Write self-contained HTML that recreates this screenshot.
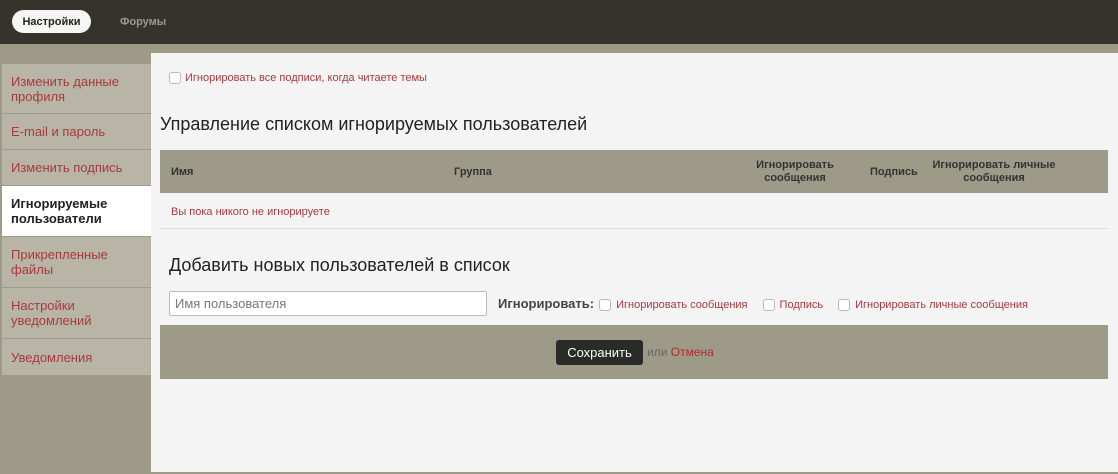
<!DOCTYPE html>
<html><head><meta charset="utf-8"><style>
*{box-sizing:border-box;margin:0;padding:0}
body{width:1118px;height:474px;background:#9e9a88;font-family:"Liberation Sans",Arial,sans-serif;position:relative;overflow:hidden}
.top{position:absolute;left:0;top:0;width:1118px;height:44px;background:#35332b}
.tab1{position:absolute;left:12px;top:10px;width:79px;height:23px;border-radius:12px;background:#f6f6f4;font-size:11px;font-weight:bold;color:#222;text-align:center;line-height:24px}
.tab2{position:absolute;left:120px;top:10px;font-size:11px;font-weight:bold;color:#9a9a90;line-height:24px}
.side{position:absolute;left:2px;top:64px;width:149px}
.side div{background:#b8b4a6;border-bottom:1px solid #9e9a88;color:#a83a3e;font-size:13px;line-height:15px;padding:0 9px;display:flex;align-items:center}
.side div.act{background:#fff;color:#222;font-weight:bold;width:151px}
.main{position:absolute;left:151px;top:53px;width:967px;height:419px;background:#f4f4f4}
.red{color:#a83a3e}
.cb{display:inline-block;width:12px;height:12px;border:1px solid #bbb;border-radius:3px;background:#fff;vertical-align:middle}
.abs{position:absolute}
.th{position:absolute;font-size:11px;font-weight:bold;color:#333;text-align:center;line-height:13px}
</style></head><body>
<div class="top"><div class="tab1">Настройки</div><div class="tab2">Форумы</div></div>
<div class="side">
<div style="height:50px">Изменить данные профиля</div>
<div style="height:36px">E-mail и пароль</div>
<div style="height:36px">Изменить подпись</div>
<div class="act" style="height:51px">Игнорируемые пользователи</div>
<div style="height:51px">Прикрепленные файлы</div>
<div style="height:51px">Настройки уведомлений</div>
<div style="height:36px;border:0">Уведомления</div>
</div>
<div class="main">
<div class="abs" style="left:18px;top:19px;font-size:11px"><span class="cb" style="margin-right:4px"></span><span class="red">Игнорировать все подписи, когда читаете темы</span></div>
<div class="abs" style="left:9px;top:61px;font-size:18px;color:#222">Управление списком игнорируемых пользователей</div>
<div class="abs" style="left:9px;top:97px;width:948px;height:43px;background:#9e9a88">
<div class="th" style="left:11px;top:16px">Имя</div>
<div class="th" style="left:294px;top:16px">Группа</div>
<div class="th" style="left:585px;top:9px;width:100px">Игнорировать сообщения</div>
<div class="th" style="left:710px;top:16px">Подпись</div>
<div class="th" style="left:766px;top:9px;width:136px">Игнорировать личные сообщения</div>
</div>
<div class="abs red" style="left:20px;top:153px;font-size:11px">Вы пока никого не игнорируете</div>
<div class="abs" style="left:9px;top:175px;width:948px;height:1px;background:#ddd"></div>
<div class="abs" style="left:18px;top:202px;font-size:18px;color:#222">Добавить новых пользователей в список</div>
<div class="abs" style="left:18px;top:238px;width:318px;height:25px;background:#fff;border:1px solid #bbb;border-radius:2px;font-size:13px;color:#777;padding:4px 5px">Имя пользователя</div>
<div class="abs" style="left:347px;top:243px;font-size:11px;white-space:nowrap"><b style="font-size:13px;color:#444;margin-right:5px">Игнорировать:</b><span class="cb" style="margin-right:5px"></span><span class="red">Игнорировать сообщения</span><span class="cb" style="margin:0 5px 0 15px"></span><span class="red">Подпись</span><span class="cb" style="margin:0 5px 0 15px"></span><span class="red">Игнорировать личные сообщения</span></div>
<div class="abs" style="left:9px;top:272px;width:948px;height:54px;background:#9e9a88">
<div class="abs" style="left:396px;top:15px;width:87px;height:25px;background:#2a2a28;border-radius:3px;color:#fff;font-size:13px;text-align:center;line-height:25px">Сохранить</div>
<div class="abs" style="left:487px;top:20px;font-size:12px;color:#666">или <span style="color:#b02a30">Отмена</span></div>
</div>
</div>
</body></html>
